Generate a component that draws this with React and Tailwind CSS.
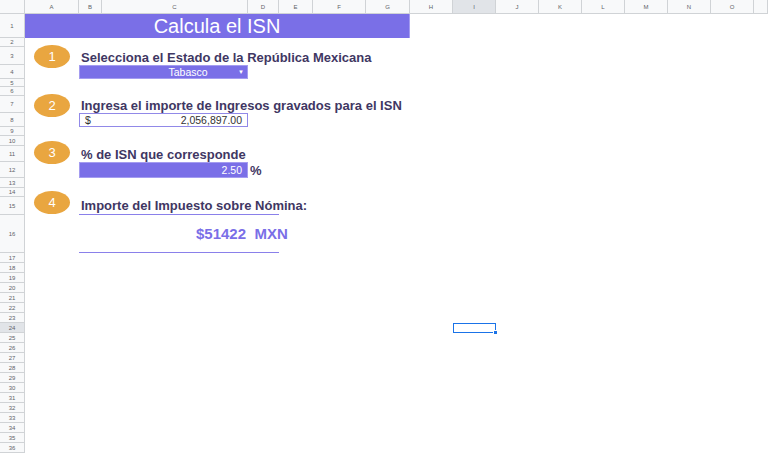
import React from "react";

const COLS = [25, 54, 23, 146, 31, 34, 53, 44, 43, 43, 43, 43, 43, 43, 43, 43, 14];
const LETTERS = ["", "A", "B", "C", "D", "E", "F", "G", "H", "I", "J", "K", "L", "M", "N", "O", ""];
const ROWS = [14, 24, 9, 18, 14, 8, 9, 17, 14, 9, 10, 16, 16, 10, 9, 18, 38, ...Array(20).fill(10)];

function Cells() {
  const out = [];
  ROWS.forEach((_, r) => {
    COLS.forEach((__, c) => {
      const header = r === 0 || c === 0;
      if (!header) return;
      const sel = (r === 0 && c === 9) || (c === 0 && r === 24);
      let label = "";
      if (r === 0) label = LETTERS[c];
      else if (c === 0) label = r;
      out.push(
        <div
          key={r + "-" + c}
          style={{ gridRow: r + 1, gridColumn: c + 1 }}
          className={`flex items-center justify-center overflow-hidden border-r border-b border-[#d0d3d6] text-[6px] leading-none text-[#5f6368] ${sel ? "bg-[#e1e4e8]" : "bg-[#f8f9fa]"}`}
        >
          {label}
        </div>
      );
    });
  });
  return out;
}

function Oval({ n, pos }) {
  return (
    <div className={`${pos} z-10 col-[2] flex justify-center`}>
      <div className="flex h-[23px] w-[36px] items-center justify-center rounded-[50%] bg-[#e9a640] text-[13px] text-white">
        {n}
      </div>
    </div>
  );
}

const heading = "z-10 col-[3/17] flex items-end whitespace-nowrap pl-[2px] text-[13px] font-bold leading-none text-[#3f3763]";

export default function App() {
  return (
    <div
      className="grid h-[454px] w-[768px] overflow-hidden bg-white"
      style={{
        fontFamily: '"Liberation Sans", Arial, sans-serif',
        gridTemplateColumns: COLS.map((w) => w + "px").join(" "),
        gridTemplateRows: ROWS.map((h) => h + "px").join(" "),
      }}
    >
      <Cells />

      <div className="z-10 col-[2/9] row-[2] flex items-center justify-center border-r border-[#a49cf0] bg-[#7a6fe7] text-[20px] leading-none text-white">
        Calcula el ISN
      </div>

      <Oval n="1" pos="row-[3/5] pt-[7px]" />
      <div className={`${heading} row-[4] pb-[1px]`}>Selecciona el Estado de la República Mexicana</div>
      <div className="z-10 col-[3/5] row-[5] flex items-center justify-between border border-[#a49cf0] bg-[#7a6fe7] pl-[58px] pr-[3px] text-[10.5px] leading-none text-white">
        <span className="flex-1 text-center">Tabasco</span>
        <span className="text-[6px]">▼</span>
      </div>

      <Oval n="2" pos="row-[7/9] pt-[7px]" />
      <div className={`${heading} row-[8] pb-[1px]`}>Ingresa el importe de Ingresos gravados para el ISN</div>
      <div className="z-10 col-[3/5] row-[9] flex items-center justify-between border border-[#9189e8] bg-white px-[5px] text-[10.5px] leading-none text-[#333]">
        <span>$</span>
        <span>2,056,897.00</span>
      </div>

      <Oval n="3" pos="row-[11/13] pt-[5px]" />
      <div className={`${heading} row-[12] pb-[1px]`}>% de ISN que corresponde</div>
      <div className="z-10 col-[3/5] row-[13] flex items-center justify-end border border-[#a49cf0] bg-[#7a6fe7] pr-[5px] text-[10.5px] leading-none text-white">
        2.50
      </div>
      <div className="z-10 col-[5] row-[13] flex items-center pl-[2px] text-[13px] font-bold leading-none text-[#3f3763]">%</div>

      <Oval n="4" pos="row-[15/17] pt-[3px]" />
      <div className="z-10 col-[3/6] row-[16] flex items-end whitespace-nowrap border-b border-[#8a80ea] pb-[2px] pl-[2px] text-[13px] font-bold leading-none text-[#3f3763]">
        Importe del Impuesto sobre Nómina:
      </div>
      <div className="z-10 col-[3/6] row-[17] flex items-start whitespace-pre border-b border-[#8a80ea] pl-[117px] pt-[11px] text-[15px] font-bold leading-none text-[#7a6fe7]">
        $51422  MXN
      </div>

      <div className="relative z-10 col-[10] row-[25] border border-[#1a73e8]">
        <div className="absolute -bottom-[3px] -right-[3px] h-[5px] w-[5px] border border-white bg-[#1a73e8]" />
      </div>
    </div>
  );
}
